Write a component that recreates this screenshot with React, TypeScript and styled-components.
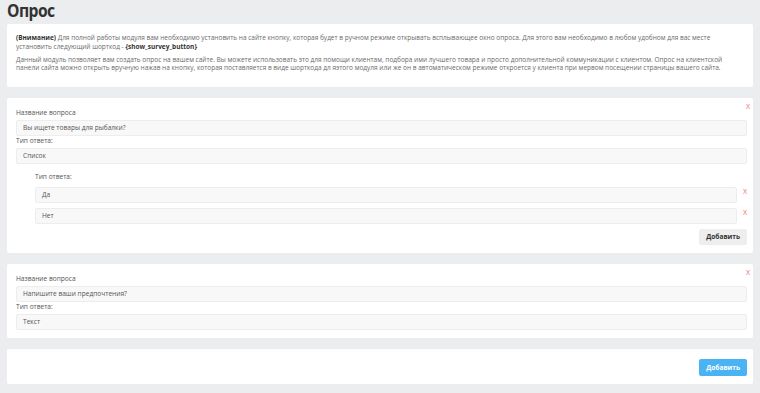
import React from 'react';
import styled, { createGlobalStyle } from 'styled-components';

const GlobalStyle = createGlobalStyle`
  html, body {
    margin: 0;
    padding: 0;
    background: #ebedef;
    font-family: "Open Sans", "Liberation Sans", sans-serif;
  }
`;

const Page = styled.div`
  padding: 0 7px 9px;
`;

const Cards = styled.div`
  display: flex;
  flex-direction: column;
  gap: 11px;
`;

const Title = styled.h1`
  margin: 0;
  height: 24px;
  font-size: 17px;
  line-height: 22px;
  font-weight: 700;
  color: #333;
  letter-spacing: -0.6px;
  transform: scaleX(0.92);
  transform-origin: left center;
`;

const Card = styled.div`
  position: relative;
  background: #fff;
  border-radius: 2px;
  padding: 10px 6px 8px 9px;
`;

const Info = styled.div`
  padding: 0 0 6px;
`;

const Para = styled.p`
  margin: 0;
  font-size: 6.5px;
  line-height: 8.6px;
  color: #6a6a6a;

  & + & {
    margin-top: 4.5px;
  }

  b {
    color: #333;
    font-weight: 700;
  }
`;

const Close = styled.span`
  position: absolute;
  top: 5px;
  right: 3px;
  font-size: 7px;
  line-height: 8px;
  color: #f26b6b;
`;

const Label = styled.div<{ $indent?: boolean }>`
  font-size: 6.6px;
  line-height: 9px;
  color: #555;
  margin: ${p => (p.$indent ? '8px 0 6px' : '0 0 3px')};
`;

const Field = styled.div`
  height: 16px;
  box-sizing: border-box;
  background: #f8f8f8;
  border: 1px solid #ededed;
  border-radius: 2px;
  padding: 0 6px;
  display: flex;
  align-items: center;
  font-size: 6.6px;
  color: #555;
`;

const Options = styled.div`
  padding-left: 19px;
  display: flex;
  flex-direction: column;
`;

const OptionRow = styled.div`
  display: flex;
  align-items: flex-start;
  margin-bottom: 5px;

  ${Field} {
    flex: 1;
  }
`;

const OptionClose = styled.span`
  width: 10px;
  text-align: right;
  font-size: 7px;
  line-height: 8px;
  color: #f26b6b;
  padding-top: 1px;
`;

const Actions = styled.div`
  display: flex;
  justify-content: flex-end;
`;

const Button = styled.button<{ $primary?: boolean }>`
  height: ${p => (p.$primary ? '17px' : '16px')};
  padding: 0 7px;
  border: none;
  border-radius: 2px;
  font-family: inherit;
  font-size: 6.6px;
  font-weight: 700;
  background: ${p => (p.$primary ? '#4ab3f4' : '#eeeeee')};
  color: ${p => (p.$primary ? '#fff' : '#333')};
`;

interface Question {
  title: string;
  type: string;
  options?: string[];
}

const questions: Question[] = [
  { title: 'Вы ищете товары для рыбалки?', type: 'Список', options: ['Да', 'Нет'] },
  { title: 'Напишите ваши предпочтения?', type: 'Текст' },
];

const QuestionCard: React.FC<{ q: Question }> = ({ q }) => (
  <Card>
    <Close>X</Close>
    <Label>Название вопроса</Label>
    <Field>{q.title}</Field>
    <Label>Тип ответа:</Label>
    <Field>{q.type}</Field>
    {q.options && (
      <>
        <Options>
          <Label $indent>Тип ответа:</Label>
          {q.options.map(o => (
            <OptionRow key={o}>
              <Field>{o}</Field>
              <OptionClose>X</OptionClose>
            </OptionRow>
          ))}
        </Options>
        <Actions>
          <Button>Добавить</Button>
        </Actions>
      </>
    )}
  </Card>
);

const App: React.FC = () => (
  <>
    <GlobalStyle />
    <Page>
      <Title>Опрос</Title>
      <Cards>
        <Card>
          <Info>
            <Para>
              <b>(Внимание)</b> Для полной работы модуля вам необходимо установить на сайте кнопку, которая будет в ручном режиме открывать всплывающее окно опроса. Для этого вам необходимо в любом удобном для вас месте установить следующий шорткод - <b>{'{show_survey_button}'}</b>
            </Para>
            <Para>
              Данный модуль позволяет вам создать опрос на вашем сайте. Вы можете использовать это для помощи клиентам, подбора ими лучшего товара и просто дополнительной коммуникации с клиентом. Опрос на клиентской панели сайта можно открыть вручную нажав на кнопку, которая поставляется в виде шорткода дл яэтого модуля или же он в автоматическом режиме откроется у клиента при мервом посещении страницы вашего сайта.
            </Para>
          </Info>
        </Card>
        {questions.map(q => (
          <QuestionCard key={q.title} q={q} />
        ))}
        <Card>
          <Actions>
            <Button $primary>Добавить</Button>
          </Actions>
        </Card>
      </Cards>
    </Page>
  </>
);

export default App;
